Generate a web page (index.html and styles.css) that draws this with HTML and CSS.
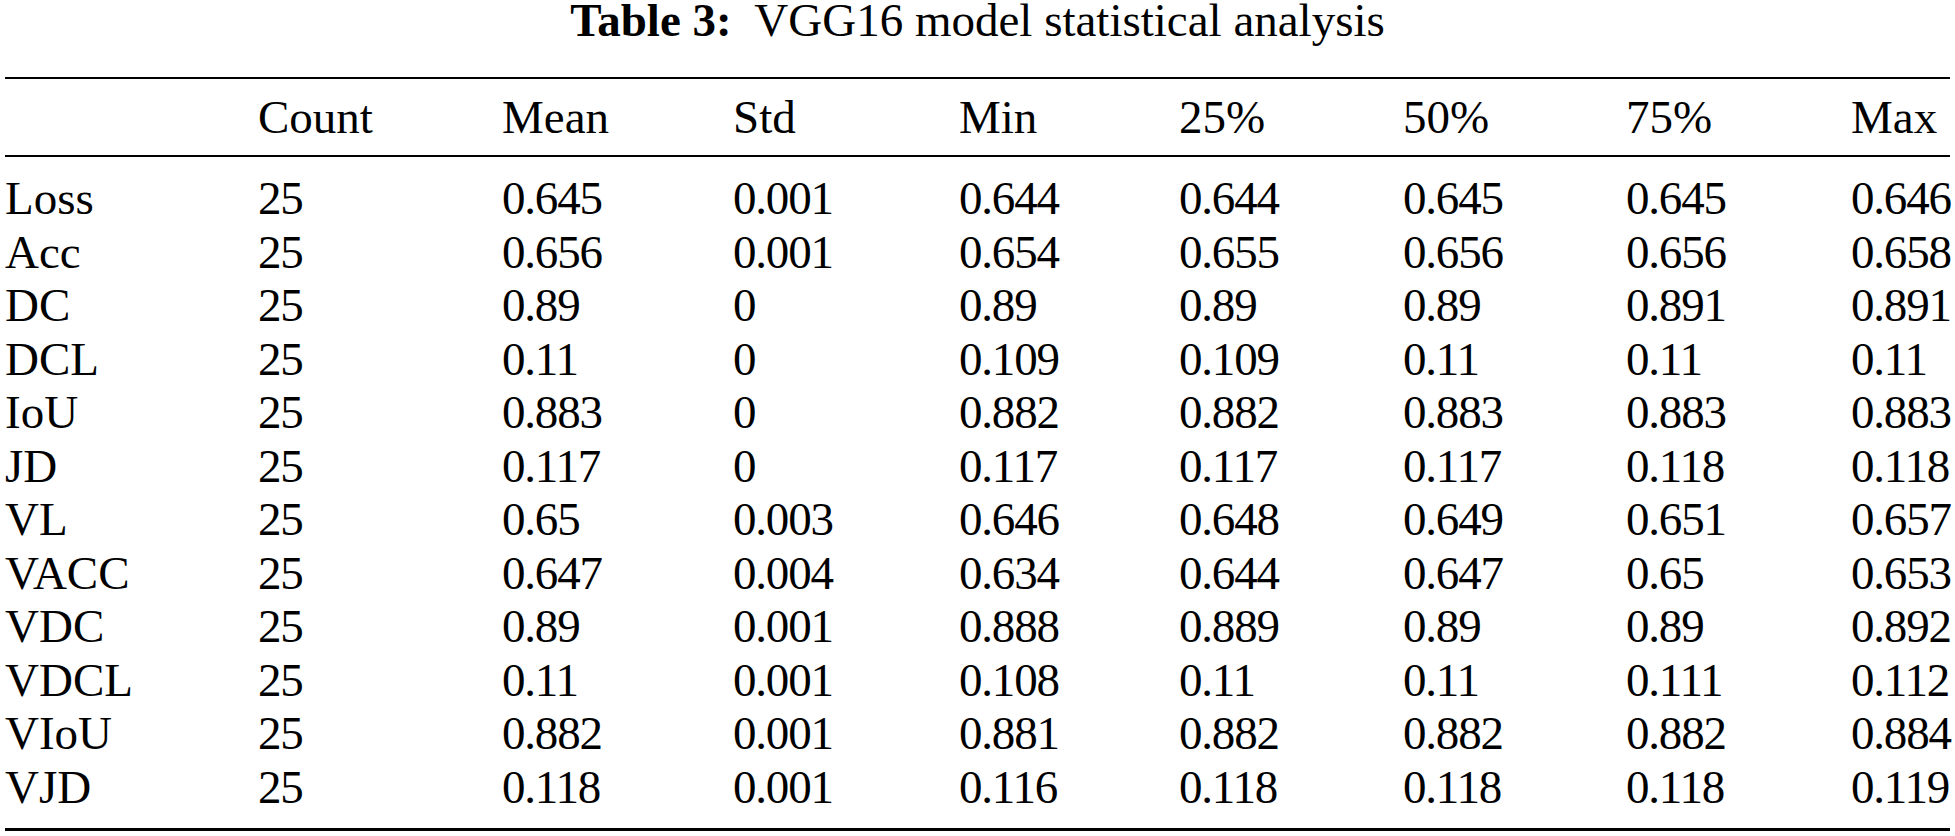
FILE: index.html
```html
<!DOCTYPE html>
<html lang="en">
<head>
<meta charset="utf-8">
<title>Table 3: VGG16 model statistical analysis</title>
<link rel="stylesheet" href="styles.css">
</head>
<body>
<div class="page">
  <h1 class="caption"><b>Table 3:</b>&nbsp; VGG16 model statistical analysis</h1>
  <div class="stats">
    <div class="row head">
      <span></span><span>Count</span><span>Mean</span><span>Std</span><span>Min</span><span>25%</span><span>50%</span><span>75%</span><span>Max</span>
    </div>
    <div class="body">
      <div class="row"><span>Loss</span><span class="n">25</span><span class="n">0.645</span><span class="n">0.001</span><span class="n">0.644</span><span class="n">0.644</span><span class="n">0.645</span><span class="n">0.645</span><span class="n">0.646</span></div>
      <div class="row"><span>Acc</span><span class="n">25</span><span class="n">0.656</span><span class="n">0.001</span><span class="n">0.654</span><span class="n">0.655</span><span class="n">0.656</span><span class="n">0.656</span><span class="n">0.658</span></div>
      <div class="row"><span>DC</span><span class="n">25</span><span class="n">0.89</span><span class="n">0</span><span class="n">0.89</span><span class="n">0.89</span><span class="n">0.89</span><span class="n">0.891</span><span class="n">0.891</span></div>
      <div class="row"><span>DCL</span><span class="n">25</span><span class="n">0.11</span><span class="n">0</span><span class="n">0.109</span><span class="n">0.109</span><span class="n">0.11</span><span class="n">0.11</span><span class="n">0.11</span></div>
      <div class="row"><span>IoU</span><span class="n">25</span><span class="n">0.883</span><span class="n">0</span><span class="n">0.882</span><span class="n">0.882</span><span class="n">0.883</span><span class="n">0.883</span><span class="n">0.883</span></div>
      <div class="row"><span>JD</span><span class="n">25</span><span class="n">0.117</span><span class="n">0</span><span class="n">0.117</span><span class="n">0.117</span><span class="n">0.117</span><span class="n">0.118</span><span class="n">0.118</span></div>
      <div class="row"><span>VL</span><span class="n">25</span><span class="n">0.65</span><span class="n">0.003</span><span class="n">0.646</span><span class="n">0.648</span><span class="n">0.649</span><span class="n">0.651</span><span class="n">0.657</span></div>
      <div class="row"><span>VACC</span><span class="n">25</span><span class="n">0.647</span><span class="n">0.004</span><span class="n">0.634</span><span class="n">0.644</span><span class="n">0.647</span><span class="n">0.65</span><span class="n">0.653</span></div>
      <div class="row"><span>VDC</span><span class="n">25</span><span class="n">0.89</span><span class="n">0.001</span><span class="n">0.888</span><span class="n">0.889</span><span class="n">0.89</span><span class="n">0.89</span><span class="n">0.892</span></div>
      <div class="row"><span>VDCL</span><span class="n">25</span><span class="n">0.11</span><span class="n">0.001</span><span class="n">0.108</span><span class="n">0.11</span><span class="n">0.11</span><span class="n">0.111</span><span class="n">0.112</span></div>
      <div class="row"><span>VIoU</span><span class="n">25</span><span class="n">0.882</span><span class="n">0.001</span><span class="n">0.881</span><span class="n">0.882</span><span class="n">0.882</span><span class="n">0.882</span><span class="n">0.884</span></div>
      <div class="row"><span>VJD</span><span class="n">25</span><span class="n">0.118</span><span class="n">0.001</span><span class="n">0.116</span><span class="n">0.118</span><span class="n">0.118</span><span class="n">0.118</span><span class="n">0.119</span></div>
    </div>
  </div>
</div>
</body>
</html>
```

FILE: styles.css
```css
html, body {
  margin: 0;
  padding: 0;
  background: #ffffff;
}
.page {
  width: 1955px;
  font-family: "Liberation Serif", "Times New Roman", serif;
  font-size: 47px;
  color: #000000;
}
.caption {
  margin: 0;
  font-size: 47px;
  font-weight: normal;
  line-height: 40px;
  text-align: center;
  white-space: nowrap;
}
.caption b {
  font-weight: bold;
}
.stats {
  margin: 37px 0 0 5px;
  width: 1945px;
  border-top: 2px solid #000;
  border-bottom: 3px solid #000;
}
.row {
  display: grid;
  grid-template-columns: 253px 244px 231px 226px 220px 224px 223px 225px 99px;
  line-height: 53.5px;
  white-space: nowrap;
}
.head {
  line-height: 76px;
  border-bottom: 2px solid #000;
}
.body {
  padding: 15px 0 14px;
}
.n {
  letter-spacing: -1.2px;
}
```
